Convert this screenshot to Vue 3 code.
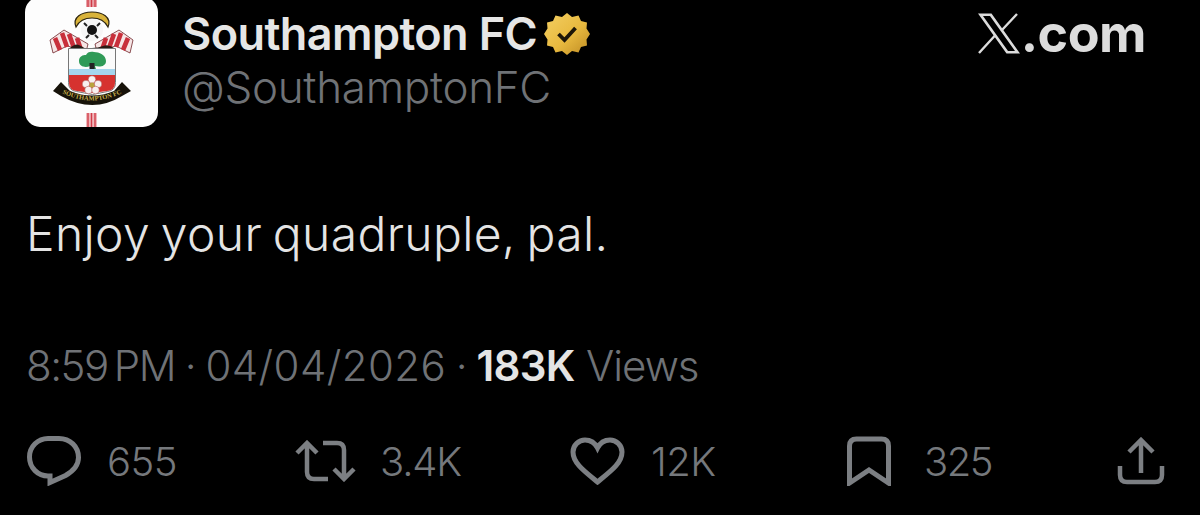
<script setup>
const actions = [
  { id: 'reply', label: '655' },
  { id: 'retweet', label: '3.4K' },
  { id: 'like', label: '12K' },
  { id: 'bookmark', label: '325' },
]
</script>

<template>
  <main class="tweet">
    <header class="head">
      <div class="avatar">
        <svg viewBox="25 -3 133 130" width="133" height="130" aria-hidden="true">
          <rect x="86" y="-3" width="11" height="10" fill="#e8a0a6" />
          <path d="M88 -3v10M91.500 -3v10M95 -3v10" stroke="#cf3a45" stroke-width="1.300" />
          <rect x="86" y="113" width="11" height="14" fill="#f0b8bc" />
          <path d="M88 113v14M91.500 113v14M95 113v14" stroke="#d03c48" stroke-width="1.400" />
          <path d="M76 27C72 17 82 12 92 12s20 5 16 15c-3-6-9-9-16-9s-13 3-16 9z" fill="#d9b33a" stroke="#2c2410" stroke-width="1.200" />
          <path d="M50 40L64 30l24 14-2 8-11-4-8-2-14 7z" fill="#f6e6e6" stroke="#6d2328" stroke-width=".8" />
          <path d="M133 40L119 30 95 44l2 8 11-4 8-2 14 7z" fill="#f6e6e6" stroke="#6d2328" stroke-width=".8" />
          <path d="M55 38l5 12M62 33l5 14M69 34l5 14M77 38l4 12M128 38l-5 12M121 33l-5 14M114 34l-5 14M106 38l-4 12" stroke="#c82f3b" stroke-width="4.600" />
          <circle cx="92" cy="30" r="11" fill="#f6f6f6" />
          <circle cx="92" cy="30" r="5" fill="#111" />
          <path d="M84 23l3 3M100 23l-3 3M86 38l3-3M98 38l-3-3" stroke="#222" stroke-width="2" />
          <path d="M70 48q6-6 11-2t11 2q6 0 11-2t11 2z" fill="#2a1a14" />
          <path d="M68.500 48.500h47v34q0 8-8 9l-15 3-16-3q-8-1-8-9z" fill="#fbfbfb" stroke="#777" stroke-width="1" />
          <rect x="69" y="69" width="46" height="6" fill="#a5d6ee" />
          <path d="M69 75h46v8q0 7-8 8l-15 2-15-2q-8-1-8-8z" fill="#d6322f" />
          <path d="M90 66c-4 2-11 1-11-5 0-5 4-6 7-6 1-3 5-4 8-3 5 0 12 3 12 9s-7 6-11 5l1 3h-6z" fill="#2f9a57" />
          <rect x="89.500" y="63" width="5" height="6" fill="#222" />
          <g fill="#f8f0f0" stroke="#a8423f" stroke-width=".5">
            <circle cx="92" cy="79.500" r="3.800" />
            <circle cx="86" cy="84" r="3.800" />
            <circle cx="98" cy="84" r="3.800" />
            <circle cx="88.500" cy="90" r="3.800" />
            <circle cx="95.500" cy="90" r="3.800" />
          </g>
          <circle cx="92" cy="85" r="2.500" fill="#b9a43e" />
          <path d="M53 91l8-9 9 9q22 9 44 0l8-9 9 9-9 5q-29 18-61 0z" fill="#17130a" />
          <path id="crestBand" d="M60 92q32 17 64 0" fill="none" />
          <text class="crest-text"><textPath href="#crestBand" startOffset="50%" text-anchor="middle">SOUTHAMPTON FC</textPath></text>
        </svg>
      </div>
      <div class="who">
        <div class="name-line">
          <span class="name">Southampton FC</span>
          <svg class="badge" viewBox="0 0 46 42" width="46" height="42" aria-hidden="true">
            <defs>
              <linearGradient id="gold" x1="0" y1="0" x2="1" y2="1">
                <stop offset="0" stop-color="#f3cf63" />
                <stop offset=".55" stop-color="#e8b93f" />
                <stop offset="1" stop-color="#bd8a22" />
              </linearGradient>
            </defs>
            <path fill="url(#gold)" d="M23 0l5 4 6.500-1.500 2.500 5.500 6 1.500-.5 6L46 21l-3.500 5.500.5 6-6 1.500-2.500 5.500L28 38l-5 4-5-4-6.500 1.500L9 34l-6-1.500.5-6L0 21l3.500-5.500-.5-6L9 8l2.500-5.500L18 4z" />
            <path d="M14.500 21l6 6 11-12" fill="none" stroke="#1d1608" stroke-width="3.800" />
          </svg>
        </div>
        <div class="handle">@SouthamptonFC</div>
      </div>
      <div class="brand">
        <svg class="x-logo" viewBox="0 0 44 41" width="44" height="41" aria-hidden="true">
          <path d="M1 .500h13.500L43 40.500H29.500z M6 3l25 35h7L13 3z" fill="#dcdcdc" fill-rule="evenodd" />
          <path d="M40 1L25 17M2 40l16-17.500" stroke="#dcdcdc" stroke-width="2.400" fill="none" />
        </svg>
        <span>.com</span>
      </div>
    </header>

    <p class="body">Enjoy your quadruple, pal.</p>

    <div class="meta">
      <span class="time">8:59&#8201;PM</span><span> · </span><span class="date">04/04/2026</span><span> · </span><strong>183K</strong><span class="views"> Views</span>
    </div>

    <footer class="actions">
      <div v-for="a in actions" :key="a.id" class="action" :class="a.id">
        <svg v-if="a.id === 'reply'" viewBox="0 0 54 50" width="54" height="50" fill="none" stroke="#7c7f83" stroke-width="5">
          <path d="M21 2.500h11c11 0 19.500 8 19.500 19 0 9-6 14-13 18l-15.500 7v-6.500h-2C11 40 2.500 32 2.500 21 2.500 10.500 11 2.500 21 2.500z" />
        </svg>
        <svg v-else-if="a.id === 'retweet'" viewBox="0 0 61 42" width="61" height="42" fill="none" stroke="#7c7f83" stroke-width="4.500">
          <path d="M12 3v29q0 7 7 7h14M2 13L12 3l10 10M49 39V10q0-7-7-7H28M39 29l10 10 10-10" />
        </svg>
        <svg v-else-if="a.id === 'like'" viewBox="0 0 55 48" width="55" height="48" fill="none" stroke="#7c7f83" stroke-width="5">
          <path d="M27.500 45C14 34 3 26 3 15 3 8 9 3 15 3c5 0 10 3 12.500 8C30 6 35 3 40 3c6 0 12 5 12 12 0 11-11 19-24.500 30z" />
        </svg>
        <svg v-else viewBox="0 0 44 50" width="44" height="50" fill="none" stroke="#7c7f83" stroke-width="5">
          <path d="M2.500 47V10q0-7 7-7h25q7 0 7 7v37L22 34z" />
        </svg>
        <span>{{ a.label }}</span>
      </div>
      <svg class="share" viewBox="0 0 48 48" width="48" height="48" fill="none" stroke="#7c7f83" stroke-width="4.500">
        <path d="M24 36V3M12 15L24 3l12 12M3 29v9q0 7 7 7h28q7 0 7-7v-9" />
      </svg>
    </footer>
  </main>
</template>

<style>
html, body { margin: 0; background: #000; }
</style>

<style scoped>
.tweet {
  box-sizing: border-box;
  width: 1200px;
  height: 515px;
  overflow: hidden;
  background: #000;
  color: #e7e9ea;
  font-family: Inter, "Liberation Sans", sans-serif;
  padding: 0 35px 0 25px;
}
.head { display: flex; align-items: flex-start; margin-top: -3px; }
.avatar {
  width: 133px;
  height: 130px;
  border-radius: 15px;
  background: #fdfdfd;
  overflow: hidden;
  flex: none;
}
.avatar svg { display: block; }
.crest-text { font: 700 6.500px "Liberation Serif", serif; fill: #c9b04a; }
.who { margin-left: 24px; padding-top: 14px; flex: 1; }
.name-line { display: flex; align-items: center; gap: 7px; height: 46px; }
.name { font-size: 45px; font-weight: 600; color: #e6e6e6; letter-spacing: -.6px; line-height: 46px; }
.badge { flex: none; }
.handle { font-size: 44px; font-weight: 300; color: #6f7276; line-height: 50px; margin-top: 5px; letter-spacing: -.3px; }
.brand { display: flex; align-items: flex-end; padding: 16px 19px 0 0; font-size: 52px; font-weight: 700; color: #dcdcdc; line-height: 41px; letter-spacing: -.5px; }
.x-logo { flex: none; }
.body { margin: 80px 0 0 1px; font-size: 48px; font-weight: 300; line-height: 54px; color: #e4e4e4; letter-spacing: .35px; word-spacing: -3px; }
.meta { margin: 82px 0 0 1px; font-size: 42px; font-weight: 300; line-height: 46px; color: #6f7276; letter-spacing: -.7px; word-spacing: -1.500px; white-space: pre; }
.meta .time { letter-spacing: -1.500px; }
.meta .date { letter-spacing: .4px; }
.meta .views { letter-spacing: -1px; margin-left: 2px; }
.meta strong { font-weight: 600; color: #e4e4e4; }
.actions { display: flex; align-items: center; margin: 47px 0 0 2px; }
.action { display: flex; align-items: center; gap: 26px; font-size: 40px; font-weight: 300; color: #75787c; letter-spacing: -.5px; }
.action.reply { width: 268px; }
.action.retweet { width: 275px; gap: 24px; letter-spacing: -1.2px; }
.action.like { width: 277px; }
.action.bookmark { flex: 1; gap: 33px; letter-spacing: -1.5px; }
.share { flex: none; }
</style>
